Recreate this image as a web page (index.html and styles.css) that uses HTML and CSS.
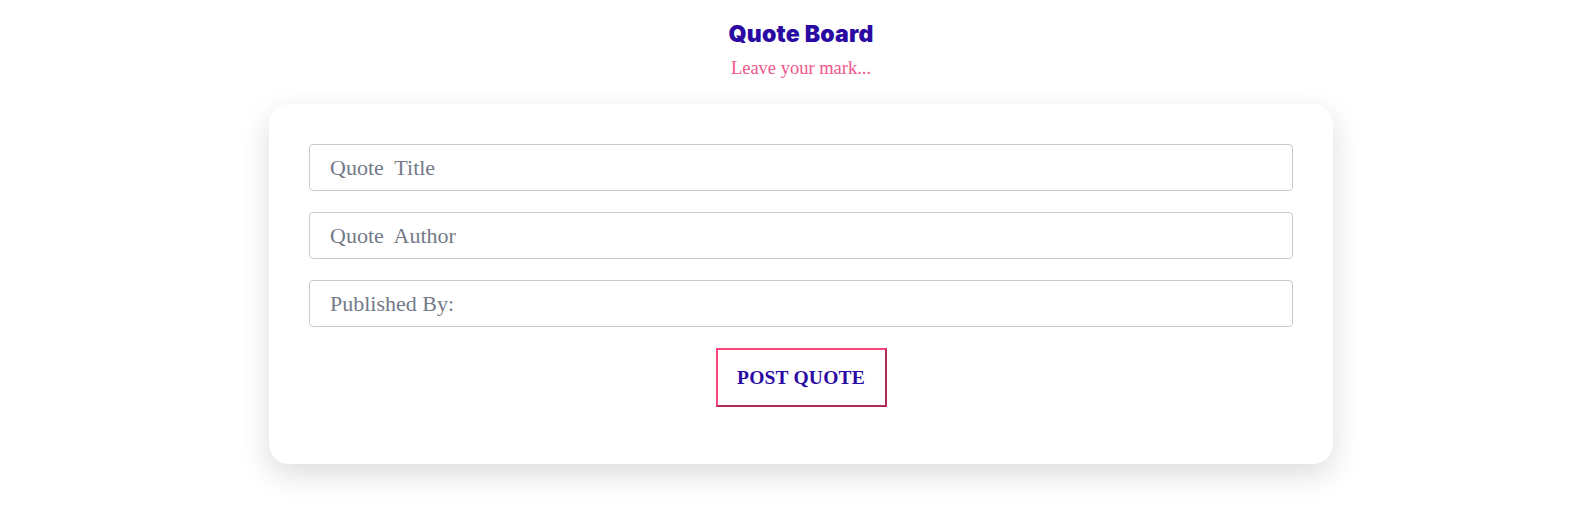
FILE: index.html
```html
<!DOCTYPE html>
<html>
<head>
<meta charset="utf-8">
<link rel="stylesheet" href="styles.css">
</head>
<body>
<div class="page">
  <header class="header">
    <h1 class="title">Quote Board</h1>
    <p class="subtitle">Leave your mark...</p>
  </header>
  <form class="card">
    <input class="field" type="text" placeholder="Quote  Title">
    <input class="field" type="text" placeholder="Quote  Author">
    <input class="field" type="text" placeholder="Published By:">
    <div class="actions">
      <button class="btn" type="button">POST QUOTE</button>
    </div>
  </form>
</div>
</body>
</html>
```
FILE: styles.css
```css
* { box-sizing: border-box; }
html, body { margin: 0; padding: 0; background: #ffffff; }
.page {
  min-height: 100vh;
  display: flex;
  flex-direction: column;
  align-items: center;
  padding: 20px 0 60px 18px;
}
.header {
  display: flex;
  flex-direction: column;
  align-items: center;
}
.title {
  margin: 0;
  font-family: "Inter", "Open Sans", sans-serif;
  font-weight: 900;
  font-size: 23px;
  line-height: 28px;
  color: #2a0aa3;
  letter-spacing: 0.2px;
}
.subtitle {
  margin: 9px 0 0;
  font-family: "Liberation Serif", serif;
  font-size: 18.5px;
  line-height: 22px;
  color: #f0578a;
}
.card {
  margin-top: 25px;
  width: 1064px;
  background: #ffffff;
  border-radius: 20px;
  box-shadow: 0 10px 30px rgba(0, 0, 0, 0.14);
  padding: 40px 40px 57px;
  display: flex;
  flex-direction: column;
  gap: 21px;
}
.field {
  display: block;
  width: 100%;
  height: 47px;
  border: 1px solid #c8cbd6;
  border-radius: 4px;
  padding: 0 20px;
  font-family: "Liberation Serif", serif;
  font-size: 22px;
  color: #333;
  outline: none;
  background: #fff;
}
.field::placeholder { color: #747a88; }
.actions {
  display: flex;
  justify-content: center;
}
.btn {
  width: 171px;
  height: 59px;
  background: #ffffff;
  border: 2px solid;
  border-color: #fb4279 #b02a55 #b02a55 #fb4279;
  font-family: "Liberation Serif", serif;
  font-weight: 700;
  font-size: 19.5px;
  color: #2a0aa3;
  letter-spacing: 0.2px;
  cursor: pointer;
}
```
